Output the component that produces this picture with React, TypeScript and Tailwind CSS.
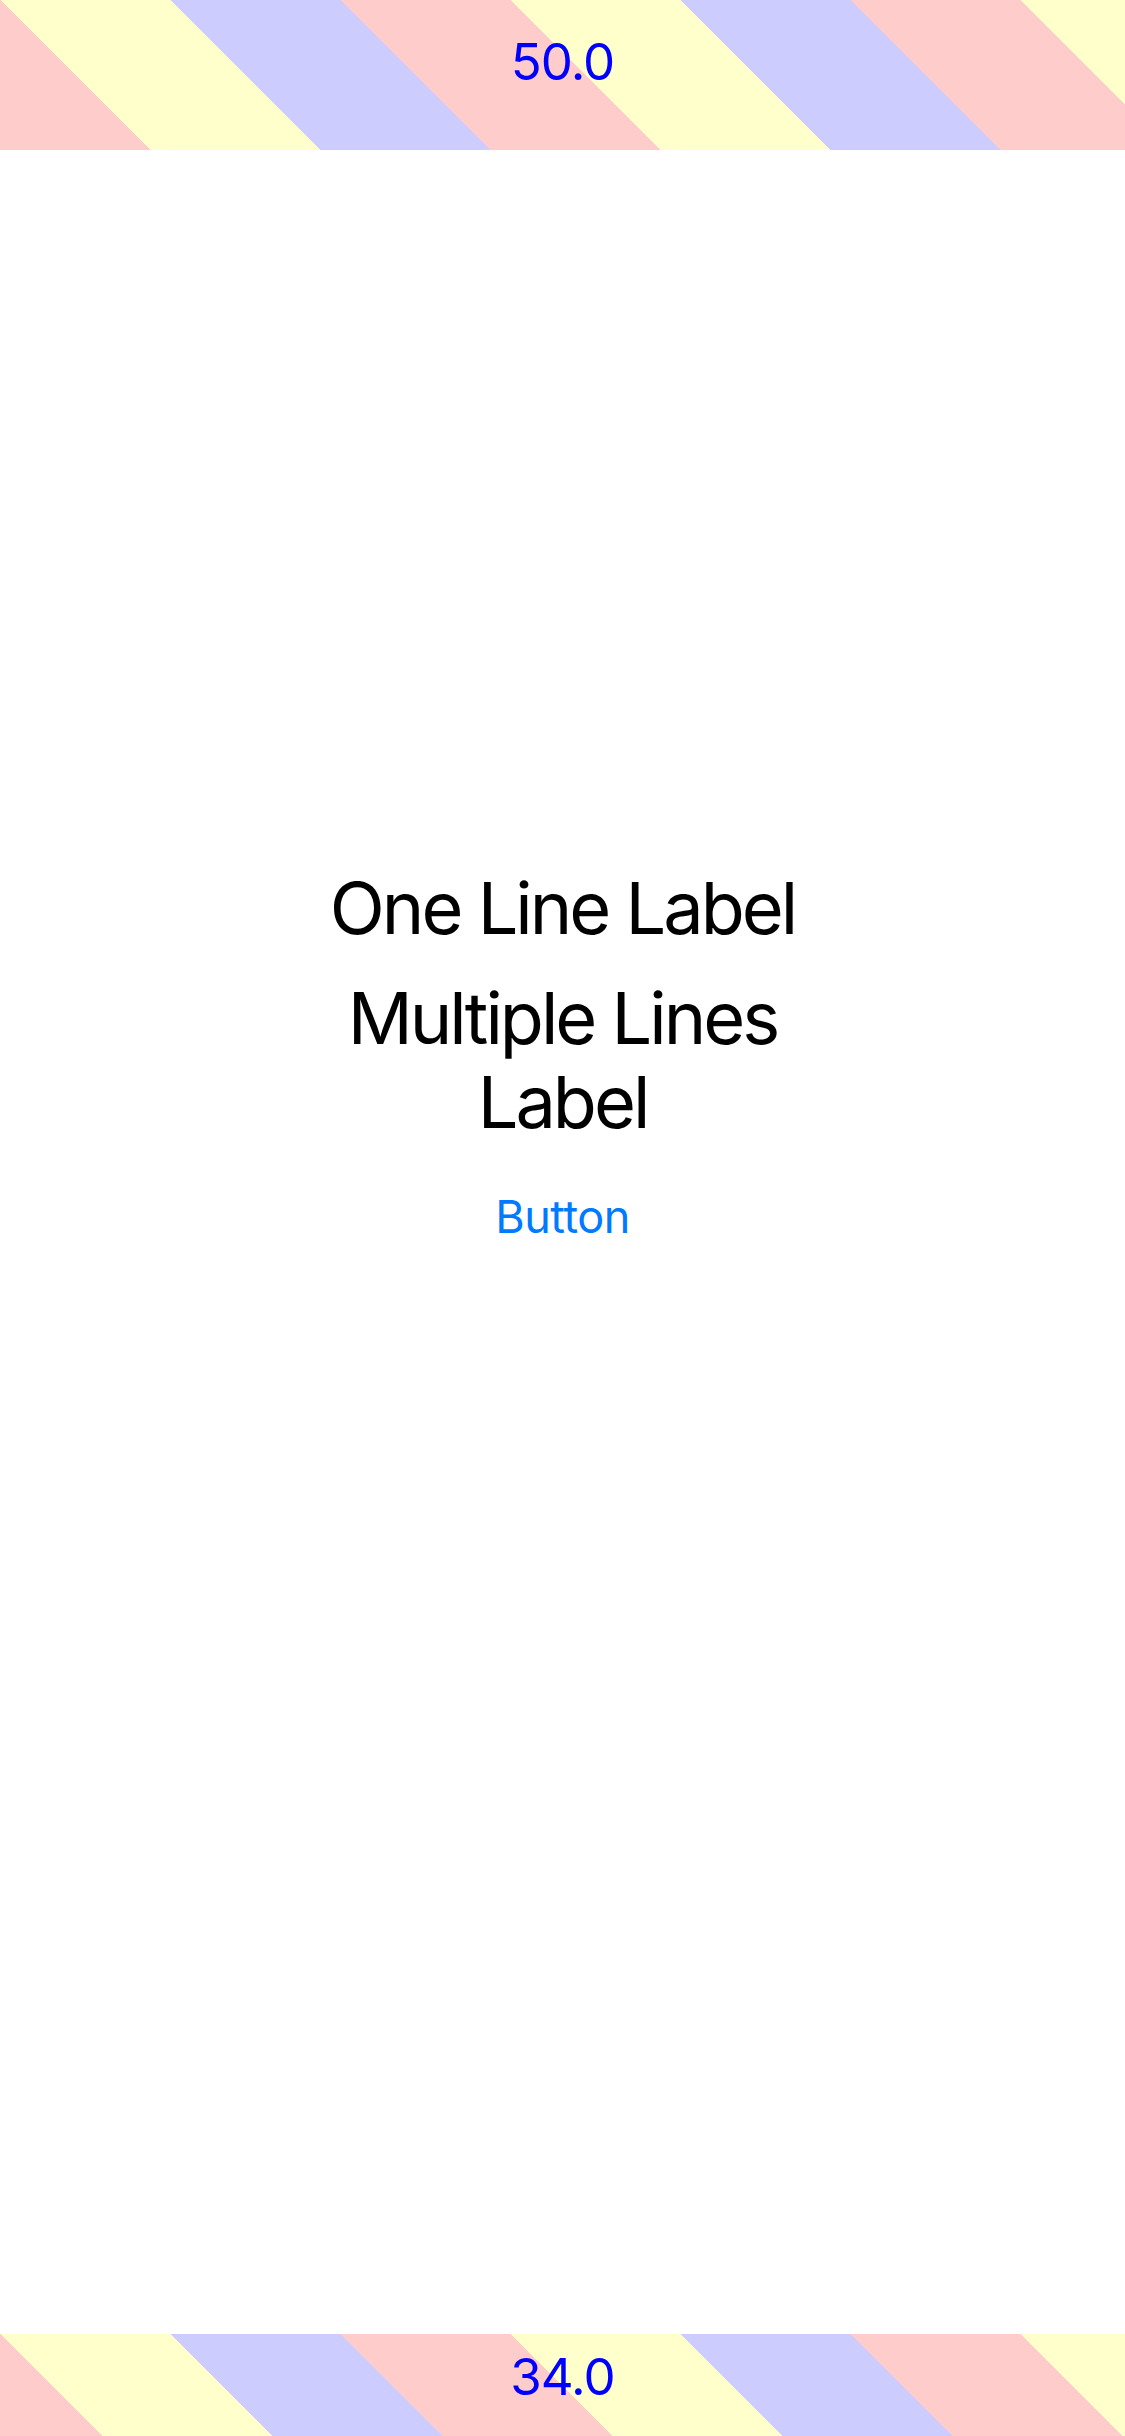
import React from "react";

const COLORS = ["#FFFFCC", "#CCCCFF", "#FFCCCC"];

function Stripes({ h }: { h: number }) {
  const polys: React.ReactNode[] = [];
  for (let i = -6; i < 10; i++) {
    const c = i * 170;
    const color = COLORS[((i % 3) + 3) % 3];
    polys.push(
      <polygon
        key={i}
        points={`${c},0 ${c + 170},0 ${c + 170 + h},${h} ${c + h},${h}`}
        fill={color}
      />
    );
  }
  return (
    <svg
      className="absolute inset-0"
      width={1125}
      height={h}
      viewBox={`0 0 1125 ${h}`}
      shapeRendering="crispEdges"
    >
      {polys}
    </svg>
  );
}

export default function App() {
  const font = { fontFamily: "Inter, 'Noto Sans', sans-serif" };
  return (
    <div className="flex flex-col w-[1125px] h-[2436px] bg-white" style={font}>
      <div className="relative h-[150px] w-full overflow-hidden shrink-0">
        <Stripes h={150} />
        <div className="relative flex justify-center pt-[36px] text-[51px] leading-[51px] text-[#0000FF] tracking-[-1px]">
          50.0
        </div>
      </div>
      <div className="flex-1 flex flex-col items-center pt-[715px]">
        <div className="text-[72px] leading-[86px] text-black tracking-[-3px] whitespace-nowrap">
          One Line Label
        </div>
        <div className="mt-[25px] w-[520px] text-center text-[72px] leading-[84px] text-black tracking-[-3px]">
          Multiple Lines Label
        </div>
        <button className="mt-[46px] text-[45px] leading-[54px] text-[#007AFF] tracking-[-0.5px]">
          Button
        </button>
      </div>
      <div className="relative h-[102px] w-full overflow-hidden shrink-0">
        <Stripes h={102} />
        <div className="relative flex justify-center pt-[17px] text-[51px] leading-[51px] text-[#0000FF] tracking-[-1px]">
          34.0
        </div>
      </div>
    </div>
  );
}
